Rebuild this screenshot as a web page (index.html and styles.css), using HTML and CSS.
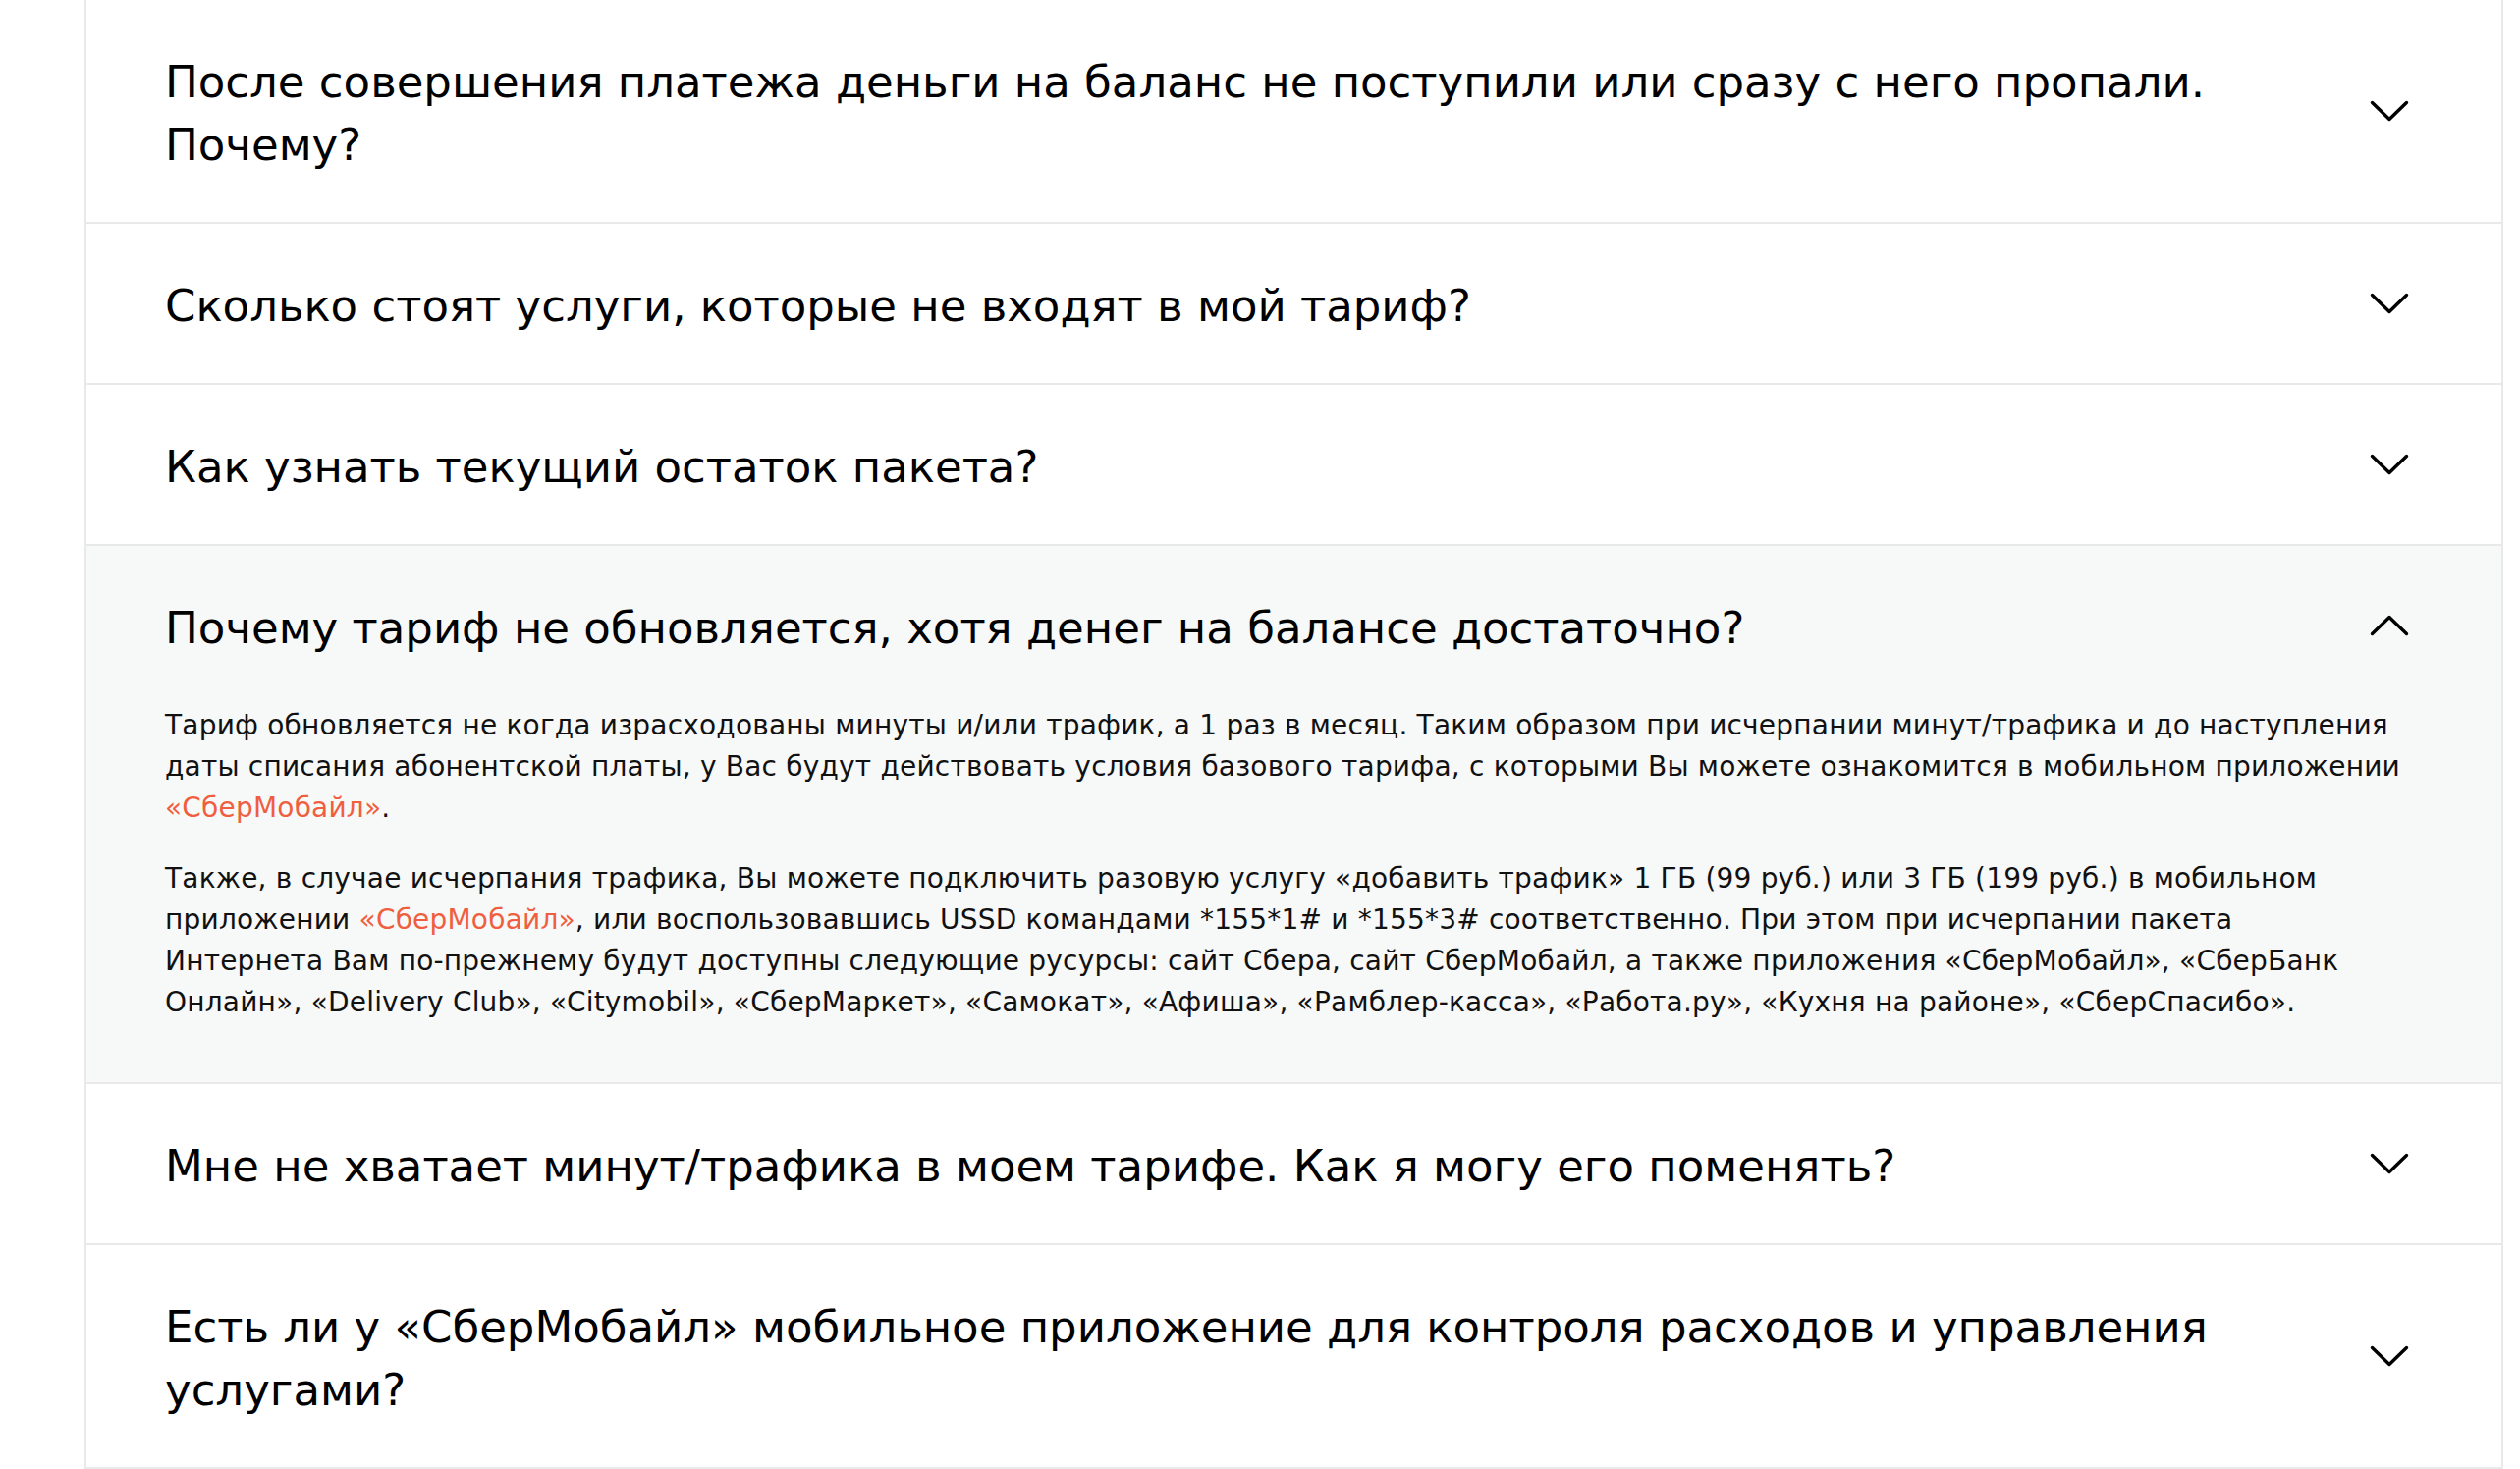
FILE: index.html
```html
<!DOCTYPE html>
<html lang="ru">
<head>
<meta charset="utf-8">
<title>FAQ</title>
<link rel="stylesheet" href="styles.css">
</head>
<body>
<div class="faq">
  <div class="item">
    <div class="head">
      <div class="q">После совершения платежа деньги на баланс не поступили или сразу с него пропали. Почему?</div>
      <svg class="chev" viewBox="0 0 40 22"><polyline points="2.5,2.5 20,19.5 37.5,2.5"/></svg>
    </div>
  </div>
  <div class="item">
    <div class="head">
      <div class="q">Сколько стоят услуги, которые не входят в мой тариф?</div>
      <svg class="chev" viewBox="0 0 40 22"><polyline points="2.5,2.5 20,19.5 37.5,2.5"/></svg>
    </div>
  </div>
  <div class="item">
    <div class="head">
      <div class="q">Как узнать текущий остаток пакета?</div>
      <svg class="chev" viewBox="0 0 40 22"><polyline points="2.5,2.5 20,19.5 37.5,2.5"/></svg>
    </div>
  </div>
  <div class="item open">
    <div class="head">
      <div class="q">Почему тариф не обновляется, хотя денег на балансе достаточно?</div>
      <svg class="chev" viewBox="0 0 40 22"><polyline points="2.5,19.5 20,2.5 37.5,19.5"/></svg>
    </div>
    <div class="body">
      <p>Тариф обновляется не когда израсходованы минуты и/или трафик, а 1 раз в месяц. Таким образом при исчерпании минут/трафика и до наступления даты списания абонентской платы, у Вас будут действовать условия базового тарифа, с которыми Вы можете ознакомится в мобильном приложении <a href="#">«СберМобайл»</a>.</p>
      <p>Также, в случае исчерпания трафика, Вы можете подключить разовую услугу «добавить трафик» 1 ГБ (99 руб.) или 3 ГБ (199 руб.) в мобильном приложении <a href="#">«СберМобайл»</a>, или воспользовавшись USSD командами *155*1# и *155*3# соответственно. При этом при исчерпании пакета<br>Интернета Вам по-прежнему будут доступны следующие русурсы: сайт Сбера, сайт СберМобайл, а также приложения «СберМобайл», «СберБанк Онлайн», «Delivery Club», «Citymobil», «СберМаркет», «Самокат», «Афиша», «Рамблер-касса», «Работа.ру», «Кухня на районе», «СберСпасибо».</p>
    </div>
  </div>
  <div class="item">
    <div class="head">
      <div class="q">Мне не хватает минут/трафика в моем тарифе. Как я могу его поменять?</div>
      <svg class="chev" viewBox="0 0 40 22"><polyline points="2.5,2.5 20,19.5 37.5,2.5"/></svg>
    </div>
  </div>
  <div class="item">
    <div class="head">
      <div class="q">Есть ли у «СберМобайл» мобильное приложение для контроля расходов и управления услугами?</div>
      <svg class="chev" viewBox="0 0 40 22"><polyline points="2.5,2.5 20,19.5 37.5,2.5"/></svg>
    </div>
  </div>
</div>
</body>
</html>
```

FILE: styles.css
```css
html, body {
  margin: 0;
  padding: 0;
  background: #ffffff;
}

body {
  font-family: "DejaVu Sans", "Liberation Sans", sans-serif;
  color: #000000;
}

.faq {
  margin: 0 17px 0 86px;
  border-left: 2px solid #e9e9e9;
  border-right: 2px solid #e9e9e9;
}

.item {
  border-bottom: 2px solid #e9e9e9;
  background: #ffffff;
}

.item.open {
  background: #f7f8f8;
}

.head {
  display: flex;
  align-items: center;
  justify-content: space-between;
  padding: 0 94px 0 80px;
  gap: 60px;
}

.q {
  font-size: 45px;
  line-height: 64px;
  padding: 52px 0 46px 0;
  flex: 1 1 auto;
  max-width: 2220px;
}

.chev {
  width: 40px;
  height: 22px;
  flex: 0 0 auto;
  fill: none;
  stroke: #000000;
  stroke-width: 3.4;
  stroke-linecap: round;
  stroke-linejoin: round;
}

.body {
  padding: 0 96px 60px 80px;
}

.body p {
  margin: 0 0 30px 0;
  font-size: 28px;
  line-height: 42px;
  letter-spacing: 0.2px;
  color: #111111;
}

.body p:last-child {
  margin-bottom: 0;
}

.body a {
  color: #ef5f3f;
  text-decoration: none;
}
```
